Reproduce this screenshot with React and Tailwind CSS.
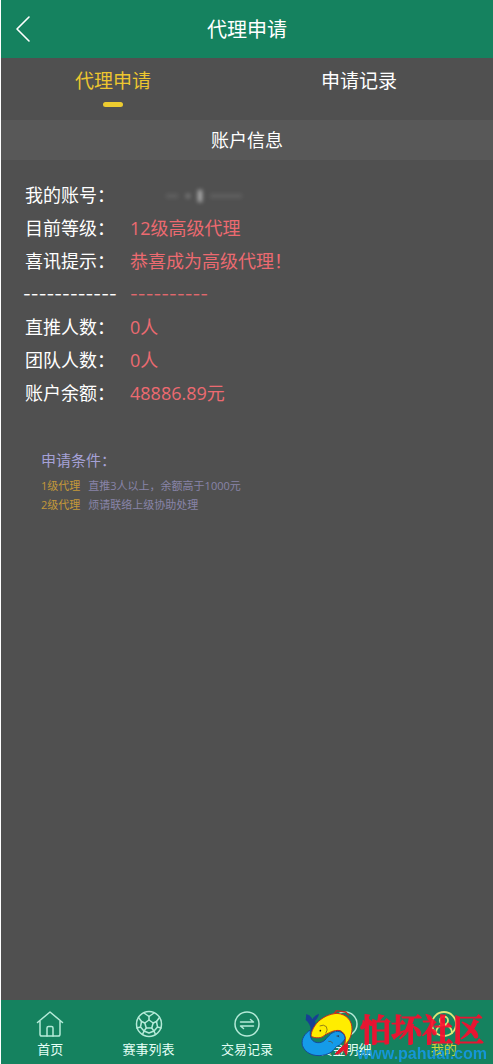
import React from 'react';

const rows = [
  { label: '我的账号：', value: null },
  { label: '目前等级：', value: '12级高级代理' },
  { label: '喜讯提示：', value: '恭喜成为高级代理！' },
  { divider: true },
  { label: '直推人数：', value: '0人' },
  { label: '团队人数：', value: '0人' },
  { label: '账户余额：', value: '48886.89元' },
];

const conditions = [
  { level: '1级代理', text: '直推3人以上，余额高于1000元' },
  { level: '2级代理', text: '烦请联络上级协助处理' },
];

const stroke = {
  fill: 'none',
  stroke: 'currentColor',
  strokeLinecap: 'round',
  strokeLinejoin: 'round',
};

function HomeIcon() {
  return (
    <svg className="size-7" viewBox="0 0 28 28" strokeWidth="1.5" {...stroke} aria-hidden="true">
      <path d="M1.500 12.500 14 2l12.500 10.500M4 11v13.200q0 1.800 1.800 1.800h16.400q1.800 0 1.800-1.800V11" />
      <path d="M11 26v-8q0-1.500 1.500-1.500h3Q17 16.500 17 18v8" />
    </svg>
  );
}

function BallIcon() {
  return (
    <svg className="size-7" viewBox="0 0 28 28" strokeWidth="1.500" {...stroke} aria-hidden="true">
      <circle cx="14" cy="14" r="12.500" />
      <path d="M14 10 18.200 13 16.700 18H11.300L9.800 13z" />
      <path d="M14 10V6.500M18.200 13l3.300-1.500M16.700 18l2.300 3M11.300 18 9 21M9.800 13 6.500 11.500" />
      <path d="M9 3 14 6.500 19 3M24.500 7.500 21.500 11.500 22.500 17l3.500 1M20.500 24.500 19 21l3.500-4M7.500 24.500 9 21l-3.500-4L2 18M3.500 7.500l3 4L5.500 17M9 21l5 2 5-2" />
    </svg>
  );
}

function TradeIcon() {
  return (
    <svg className="size-7" viewBox="0 0 28 28" strokeWidth="1.500" {...stroke} aria-hidden="true">
      <circle cx="14" cy="14" r="12" />
      <path d="M7.500 12h13L17.500 9.500M20.500 16h-13l3 2.500" />
    </svg>
  );
}

function FundsIcon() {
  return (
    <svg className="size-7" viewBox="0 0 28 28" strokeWidth="1.500" {...stroke} aria-hidden="true">
      <circle cx="14" cy="14" r="12" />
    </svg>
  );
}

function UserIcon() {
  return (
    <svg className="size-7" viewBox="0 0 28 28" strokeWidth="1.800" {...stroke} aria-hidden="true">
      <circle cx="14" cy="14" r="12" />
      <circle cx="14" cy="10.500" r="4" />
      <path d="M6 23c0-5 3.500-8 8-8s8 3 8 8" />
    </svg>
  );
}

const tabs = [
  { label: '首页', Icon: HomeIcon },
  { label: '赛事列表', Icon: BallIcon },
  { label: '交易记录', Icon: TradeIcon },
  { label: '资金明细', Icon: FundsIcon },
  { label: '我的', Icon: UserIcon, active: true },
];

function FishLogo() {
  return (
    <svg className="h-[60px] w-[62px] shrink-0" viewBox="0 0 186 180" aria-hidden="true">
      <path d="M34 84C38 70 30 56 20 48L22 30Q36 34 40 46 46 34 60 29 58 42 48 50 52 62 46 78z" fill="#173f94" />
      <path d="M106 28 112 20 140 24 150 34M112 20 108 30" fill="none" stroke="#c52b20" strokeWidth="4" />
      <path d="M142 100 136 122 108 150 118 150 134 138 142 154 146 128z" fill="#e0182c" stroke="#e0182c" strokeWidth="3" />
      <path d="M36 96C38 68 66 32 114 28 142 30 160 50 159 76 158 96 150 112 136 124 142 106 140 88 124 80 104 76 90 88 78 92 70 104 46 104 36 96z" fill="#ffed00" stroke="#c52b20" strokeWidth="3" />
      <path d="M34 78C18 88 6 104 10 124 18 148 44 158 70 154 96 150 104 138 112 128 124 124 134 112 138 104 138 92 130 84 116 82 98 82 88 98 78 108 66 120 46 118 38 106 32 96 34 86 34 78z" fill="#159be8" stroke="#164b9b" strokeWidth="3" />
      <path d="M62 66q12-6 20 2q6 10-2 20M112 96q6-2 8 4M102 118q-6-8-14-6" fill="none" stroke="#5d4a20" strokeWidth="2" />
      <circle cx="64" cy="80" r="2.500" fill="#2b2410" />
      <circle cx="118" cy="96" r="2.500" fill="#143565" />
    </svg>
  );
}

export default function App() {
  return (
    <div className="flex min-h-screen flex-col border-l border-white bg-[#505050] font-['Open_Sans','Noto_Sans_CJK_SC',sans-serif] text-white">
      <header className="grid h-[58px] grid-cols-[48px_1fr_48px] items-center bg-[#15825f]">
        <button type="button" aria-label="返回" className="flex h-full items-center pl-3">
          <svg className="h-7 w-5" viewBox="0 0 20 28" strokeWidth="1.600" {...stroke} aria-hidden="true">
            <path d="M16 2 4 14l12 12" />
          </svg>
        </button>
        <h1 className="pt-0.5 text-center text-xl">代理申请</h1>
      </header>

      <div className="grid h-[62px] grid-cols-2 text-[19px] leading-7">
        <button type="button" className="flex flex-col items-center gap-[7px] pt-[9px] pr-[22px] text-[#edc62f]">
          代理申请
          <span className="h-[5px] w-5 rounded-full bg-[#edcc30]" />
        </button>
        <button type="button" className="flex flex-col items-center pt-[9px] pr-[22px]">申请记录</button>
      </div>

      <h2 className="bg-[#585858] text-center text-lg leading-10">账户信息</h2>

      <main className="flex-1 pt-[19px]">
        <dl className="pl-6 text-lg leading-[33px]">
          {rows.map((row, i) =>
            row.divider ? (
              <div key={i} className="flex font-[Inter,sans-serif] text-[17px]" aria-hidden="true">
                <span className="-ml-0.5 w-[107px]">------------</span>
                <span className="text-[#e0686d]">----------</span>
              </div>
            ) : (
              <div key={i} className="flex">
                <dt className="w-[105px]">{row.label}</dt>
                <dd className="text-[#ec6a70]">
                  {row.value ?? (
                    <span className="flex h-[33px] items-center gap-2 pl-9 blur-[2px]">
                      <span className="h-1 w-3 bg-white/10" />
                      <span className="h-1 w-1 bg-white/30" />
                      <span className="h-3 w-1 bg-white/60" />
                      <span className="h-1 w-8 bg-white/10" />
                    </span>
                  )}
                </dd>
              </div>
            )
          )}
        </dl>

        <section className="mt-[35px] pl-10">
          <h3 className="text-[15px] leading-[30px] text-[#a5a1d6]">申请条件：</h3>
          <ul className="pt-px text-[11px] leading-[19px]">
            {conditions.map((c) => (
              <li key={c.level} className="flex gap-2">
                <span className="text-[#c3983a]">{c.level}</span>
                <span className="text-[#8884a8]">{c.text}</span>
              </li>
            ))}
          </ul>
        </section>
      </main>

      <footer className="relative bg-[#15825f]">
        <nav className="grid h-16 grid-cols-5">
          {tabs.map(({ label, Icon, active }) => (
            <a
              key={label}
              href="#"
              className={
                active
                  ? 'flex flex-col items-center pt-[10px] text-[13px] leading-[22px] text-[#cbd63d]'
                  : 'flex flex-col items-center pt-[10px] text-[13px] leading-[22px] text-[#e4fff6]'
              }
            >
              <span className={active ? 'text-[#dbe878]' : 'text-[#b4ead8]'}>
                <Icon />
              </span>
              {label}
            </a>
          ))}
        </nav>
        <div className="pointer-events-none absolute right-1.5 bottom-0 flex items-end">
          <FishLogo />
          <div className="-ml-1 flex flex-col items-center opacity-90">
            <span className="font-['Noto_Serif_CJK_SC','Noto_Sans_CJK_SC',serif] text-[31px] leading-8 font-bold text-[#ff0a2e] [-webkit-text-stroke:1px_#ff0a2e]">怕坏社区</span>
            <span className="font-['Liberation_Sans',sans-serif] text-base leading-5 font-bold text-[#1698e6]">www.pahuai.com</span>
          </div>
        </div>
      </footer>
    </div>
  );
}
